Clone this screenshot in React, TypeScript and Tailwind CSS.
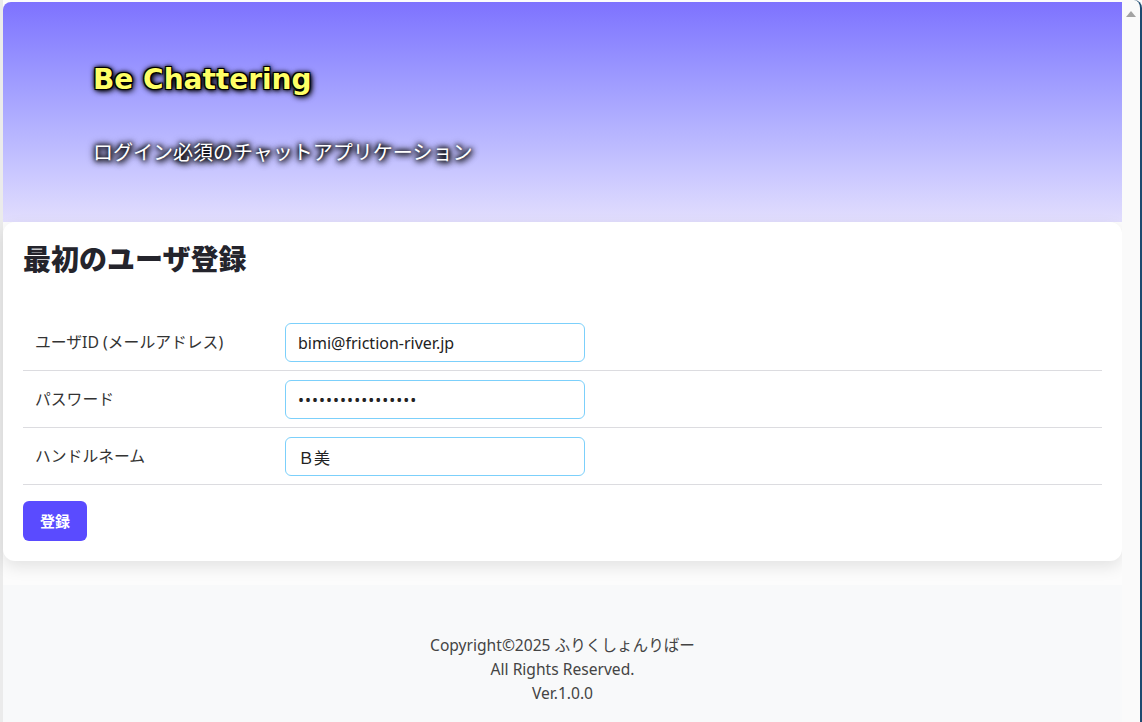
import { useState } from 'react';

const jp = "font-['Noto_Sans','Noto_Sans_CJK_JP',sans-serif]";

interface RowProps {
  label: string;
  type: string;
  value: string;
  onChange: (v: string) => void;
}

function FormRow({ label, type, value, onChange }: RowProps) {
  return (
    <div className="flex items-center border-b border-[#dcdce0] pt-[9px] pb-[8px]">
      <div className="w-[262px] px-3 text-[15.8px] text-[#333]">{label}</div>
      <input
        type={type}
        value={value}
        onChange={(e) => onChange(e.target.value)}
        className={`h-[39px] w-[300px] rounded-md border border-[#7cd0fb] bg-white px-3 text-[16px] text-[#222] outline-none ${
          type === 'password' ? 'tracking-[1px]' : ''
        }`}
      />
    </div>
  );
}

export default function App() {
  const [email, setEmail] = useState('bimi@friction-river.jp');
  const [password, setPassword] = useState('abcdefghijklmnopq');
  const [handle, setHandle] = useState('Ｂ美');

  return (
    <div className={`flex h-[722px] w-[1142px] overflow-hidden bg-[#fcfcfc] ${jp}`}>
      <div className="w-[3px] bg-[#ebebeb]" />

      <div className="flex flex-1 flex-col pt-[2px]">
        <header className="h-[220px] rounded-tl-[8px] bg-gradient-to-b from-[#7e72fe] to-[#e2defd] pl-[90px] pt-[58px]">
          <h1 className="font-['DejaVu_Sans',sans-serif] text-[28px] font-bold leading-[40px] text-[#ffff66] [text-shadow:1px_1px_0_#000,-1px_-1px_0_#000,1px_-1px_0_#000,-1px_1px_0_#000,0_0_3px_#000,0_0_4px_#000,0_0_6px_#000,2px_2px_6px_#000]">
            Be Chattering
          </h1>
          <p className="mt-[38px] text-[20px] leading-[30px] text-white [text-shadow:0_0_4px_#000,0_0_6px_#000,0_0_8px_#000,2px_2px_6px_#000]">
            ログイン必須のチャットアプリケーション
          </p>
        </header>

        <main className="rounded-xl bg-white px-5 pt-5 pb-[20px] shadow-[0_6px_16px_rgba(0,0,0,0.1)]">
          <h2 className="text-[28px] font-black leading-[34px] text-[#24242c]">最初のユーザ登録</h2>
          <div className="mt-[38px]">
            <FormRow label="ユーザID (メールアドレス)" type="text" value={email} onChange={setEmail} />
            <FormRow label="パスワード" type="password" value={password} onChange={setPassword} />
            <FormRow label="ハンドルネーム" type="text" value={handle} onChange={setHandle} />
          </div>
          <button className="mt-[16px] h-[40px] w-[64px] rounded-md bg-[#5a4bff] text-[15px] font-bold text-white">
            登録
          </button>
        </main>

        <footer className="mt-[24px] flex-1 bg-[#f8f9fa] pt-[48px] text-center text-[15.6px] leading-[24px] text-[#444]">
          <p>Copyright©2025 ふりくしょんりばー</p>
          <p>All Rights Reserved.</p>
          <p>Ver.1.0.0</p>
        </footer>
      </div>

      <div className="flex w-[20px] flex-col items-center rounded-tr-[8px] border-r-2 border-[#1d4a70] bg-[#fafafa] pt-[11px]">
        <svg width="10" height="6" viewBox="0 0 10 6">
          <polygon points="5,0 10,6 0,6" fill="#a3a3a3" />
        </svg>
      </div>
    </div>
  );
}
